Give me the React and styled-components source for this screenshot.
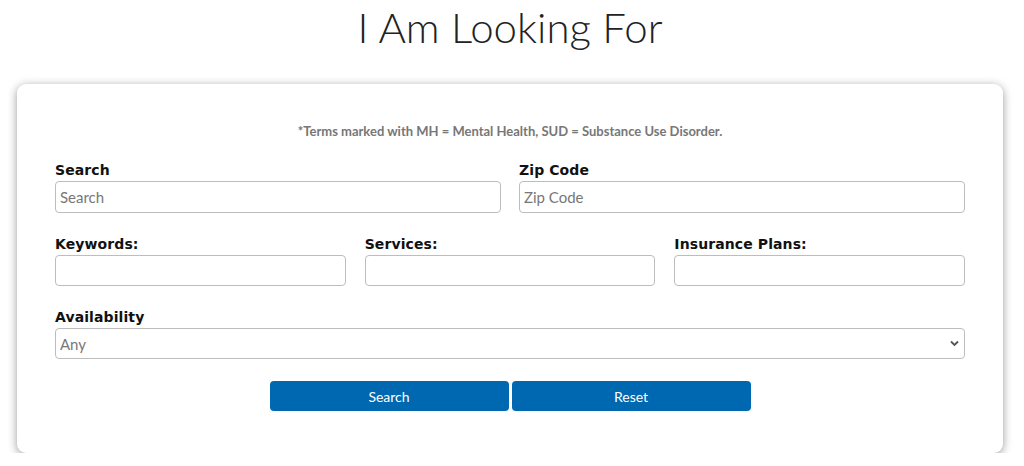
import styled, { createGlobalStyle } from "styled-components";

const GlobalStyle = createGlobalStyle`
  body {
    margin: 0;
    background: #fff;
    font-family: Lato, "Liberation Sans", sans-serif;
  }
`;

const Page = styled.div`
  padding: 0 21px 0 17px;
`;

const Title = styled.h1`
  margin: 0;
  padding-top: 3px;
  height: 81px;
  text-align: center;
  font-family: Lato, sans-serif;
  font-weight: 300;
  font-size: 42px;
  line-height: 48px;
  color: #222;
`;

const Card = styled.form`
  background: #fff;
  border-radius: 9px;
  box-shadow: 0 2px 10px rgba(0, 0, 0, 0.4);
  padding: 39px 38px 42px;
  display: flex;
  flex-direction: column;
`;

const Note = styled.p`
  margin: 0 0 22px;
  text-align: center;
  font-size: 13px;
  font-weight: 700;
  line-height: 16px;
  color: #777;
`;

const Row = styled.div`
  display: grid;
  grid-template-columns: repeat(${(p) => p.cols}, 1fr);
  column-gap: ${(p) => (p.cols === 3 ? 19 : 18)}px;
  margin-bottom: 22px;
`;

const Field = styled.label`
  display: flex;
  flex-direction: column;
`;

const Label = styled.span`
  font-family: "DejaVu Sans", sans-serif;
  font-weight: 700;
  font-size: 14px;
  letter-spacing: 0.1px;
  line-height: 18px;
  height: 18px;
  color: #111;
  margin-bottom: 2px;
`;

const Input = styled.input`
  box-sizing: border-box;
  height: ${(p) => (p.$tall ? 32 : 31)}px;
  width: 100%;
  border: 1px solid #bdbdbd;
  border-radius: 4px;
  padding: 0 4px;
  font-family: Lato, sans-serif;
  font-size: 15px;
  color: #333;
  &::placeholder {
    color: #777;
  }
`;

const SelectWrap = styled.div`
  position: relative;
`;

const Select = styled.select`
  box-sizing: border-box;
  appearance: none;
  height: 31px;
  width: 100%;
  border: 1px solid #bdbdbd;
  border-radius: 4px;
  padding: 0 4px;
  background: #fff;
  font-family: Lato, sans-serif;
  font-size: 15px;
  color: #777;
`;

const Chevron = styled.svg`
  position: absolute;
  right: 6px;
  top: 12px;
  pointer-events: none;
`;

const Buttons = styled.div`
  display: flex;
  justify-content: center;
  gap: 3px;
  margin-top: 22px;
`;

const Button = styled.button`
  width: 239px;
  height: 30px;
  border: none;
  border-radius: 4px;
  background: #0067b1;
  color: #fff;
  font-family: Lato, sans-serif;
  font-size: 14px;
  cursor: pointer;
`;

export default function App() {
  return (
    <Page>
      <GlobalStyle />
      <Title>I Am Looking For</Title>
      <Card onSubmit={(e) => e.preventDefault()}>
        <Note>*Terms marked with MH = Mental Health, SUD = Substance Use Disorder.</Note>
        <Row cols={2}>
          <Field>
            <Label>Search</Label>
            <Input $tall placeholder="Search" />
          </Field>
          <Field>
            <Label>Zip Code</Label>
            <Input $tall placeholder="Zip Code" />
          </Field>
        </Row>
        <Row cols={3}>
          {["Keywords:", "Services:", "Insurance Plans:"].map((l) => (
            <Field key={l}>
              <Label>{l}</Label>
              <Input />
            </Field>
          ))}
        </Row>
        <Field as="div">
          <Label>Availability</Label>
          <SelectWrap>
            <Select defaultValue="any">
              <option value="any">Any</option>
            </Select>
            <Chevron width="9" height="7" viewBox="0 0 9 7">
              <path d="M1 1.5l3.5 3.5 3.5-3.5" fill="none" stroke="#555" strokeWidth="1.8" />
            </Chevron>
          </SelectWrap>
        </Field>
        <Buttons>
          <Button type="submit">Search</Button>
          <Button type="reset">Reset</Button>
        </Buttons>
      </Card>
    </Page>
  );
}
